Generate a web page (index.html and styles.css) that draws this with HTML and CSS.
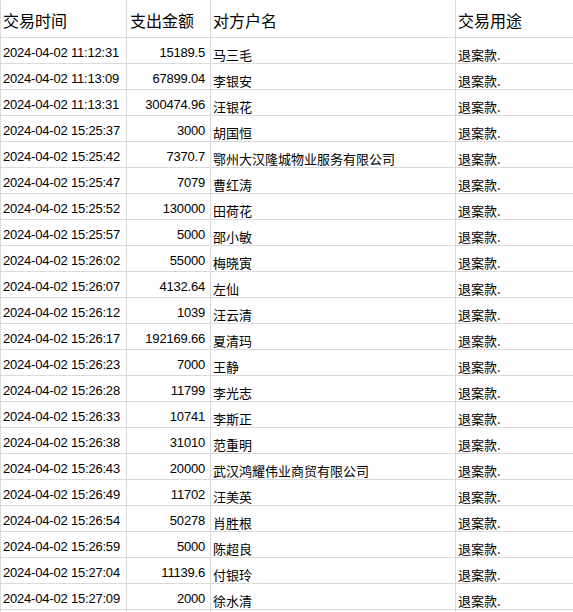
FILE: index.html
```html
<!DOCTYPE html>
<html lang="zh-CN">
<head>
<meta charset="utf-8">
<title>交易明细</title>
<link rel="stylesheet" href="styles.css">
</head>
<body>
<div class="sheet">
  <div class="row head">
    <div class="cell c-time">交易时间</div>
    <div class="cell c-amt">支出金额</div>
    <div class="cell c-name">对方户名</div>
    <div class="cell c-use">交易用途</div>
  </div>
  <div class="row"><div class="cell c-time">2024-04-02 11:12:31</div><div class="cell c-amt">15189.5</div><div class="cell c-name">马三毛</div><div class="cell c-use">退案款.</div></div>
  <div class="row"><div class="cell c-time">2024-04-02 11:13:09</div><div class="cell c-amt">67899.04</div><div class="cell c-name">李银安</div><div class="cell c-use">退案款.</div></div>
  <div class="row"><div class="cell c-time">2024-04-02 11:13:31</div><div class="cell c-amt">300474.96</div><div class="cell c-name">汪银花</div><div class="cell c-use">退案款.</div></div>
  <div class="row"><div class="cell c-time">2024-04-02 15:25:37</div><div class="cell c-amt">3000</div><div class="cell c-name">胡国恒</div><div class="cell c-use">退案款.</div></div>
  <div class="row"><div class="cell c-time">2024-04-02 15:25:42</div><div class="cell c-amt">7370.7</div><div class="cell c-name">鄂州大汉隆城物业服务有限公司</div><div class="cell c-use">退案款.</div></div>
  <div class="row"><div class="cell c-time">2024-04-02 15:25:47</div><div class="cell c-amt">7079</div><div class="cell c-name">曹红涛</div><div class="cell c-use">退案款.</div></div>
  <div class="row"><div class="cell c-time">2024-04-02 15:25:52</div><div class="cell c-amt">130000</div><div class="cell c-name">田荷花</div><div class="cell c-use">退案款.</div></div>
  <div class="row"><div class="cell c-time">2024-04-02 15:25:57</div><div class="cell c-amt">5000</div><div class="cell c-name">邵小敏</div><div class="cell c-use">退案款.</div></div>
  <div class="row"><div class="cell c-time">2024-04-02 15:26:02</div><div class="cell c-amt">55000</div><div class="cell c-name">梅晓寅</div><div class="cell c-use">退案款.</div></div>
  <div class="row"><div class="cell c-time">2024-04-02 15:26:07</div><div class="cell c-amt">4132.64</div><div class="cell c-name">左仙</div><div class="cell c-use">退案款.</div></div>
  <div class="row"><div class="cell c-time">2024-04-02 15:26:12</div><div class="cell c-amt">1039</div><div class="cell c-name">汪云清</div><div class="cell c-use">退案款.</div></div>
  <div class="row"><div class="cell c-time">2024-04-02 15:26:17</div><div class="cell c-amt">192169.66</div><div class="cell c-name">夏清玛</div><div class="cell c-use">退案款.</div></div>
  <div class="row"><div class="cell c-time">2024-04-02 15:26:23</div><div class="cell c-amt">7000</div><div class="cell c-name">王静</div><div class="cell c-use">退案款.</div></div>
  <div class="row"><div class="cell c-time">2024-04-02 15:26:28</div><div class="cell c-amt">11799</div><div class="cell c-name">李光志</div><div class="cell c-use">退案款.</div></div>
  <div class="row"><div class="cell c-time">2024-04-02 15:26:33</div><div class="cell c-amt">10741</div><div class="cell c-name">李斯正</div><div class="cell c-use">退案款.</div></div>
  <div class="row"><div class="cell c-time">2024-04-02 15:26:38</div><div class="cell c-amt">31010</div><div class="cell c-name">范重明</div><div class="cell c-use">退案款.</div></div>
  <div class="row"><div class="cell c-time">2024-04-02 15:26:43</div><div class="cell c-amt">20000</div><div class="cell c-name">武汉鸿耀伟业商贸有限公司</div><div class="cell c-use">退案款.</div></div>
  <div class="row"><div class="cell c-time">2024-04-02 15:26:49</div><div class="cell c-amt">11702</div><div class="cell c-name">汪美英</div><div class="cell c-use">退案款.</div></div>
  <div class="row"><div class="cell c-time">2024-04-02 15:26:54</div><div class="cell c-amt">50278</div><div class="cell c-name">肖胜根</div><div class="cell c-use">退案款.</div></div>
  <div class="row"><div class="cell c-time">2024-04-02 15:26:59</div><div class="cell c-amt">5000</div><div class="cell c-name">陈超良</div><div class="cell c-use">退案款.</div></div>
  <div class="row"><div class="cell c-time">2024-04-02 15:27:04</div><div class="cell c-amt">11139.6</div><div class="cell c-name">付银玲</div><div class="cell c-use">退案款.</div></div>
  <div class="row"><div class="cell c-time">2024-04-02 15:27:09</div><div class="cell c-amt">2000</div><div class="cell c-name">徐水清</div><div class="cell c-use">退案款.</div></div>
  <div class="row"><div class="cell c-time"></div><div class="cell c-amt"></div><div class="cell c-name"></div><div class="cell c-use"></div></div>
</div>
</body>
</html>
```

FILE: styles.css
```css
html, body {
  margin: 0;
  padding: 0;
  background: #ffffff;
  overflow: hidden;
}

.sheet {
  width: 100%;
  color: #000000;
  font-family: "Liberation Sans", "Noto Sans CJK SC", sans-serif;
}

.row {
  display: grid;
  grid-template-columns: 127px 84px 245px 1fr;
  height: 26px;
  box-sizing: border-box;
  border-bottom: 1px solid #dadada;
}

.row.head {
  height: 38px;
}

.cell {
  box-sizing: border-box;
  border-right: 1px solid #dadada;
  display: flex;
  align-items: flex-end;
  white-space: nowrap;
  overflow: hidden;
  padding: 0 2px 3px 2px;
  line-height: 15px;
}

.c-time {
  border-left: 1px solid #dadada;
  font-size: 13px;
  letter-spacing: -0.2px;
  padding-left: 2px;
}

.c-amt {
  justify-content: flex-end;
  font-size: 13px;
  letter-spacing: -0.2px;
  padding-right: 5px;
}

.c-name,
.c-use {
  font-family: "Noto Sans CJK SC", "Liberation Sans", sans-serif;
  font-size: 13px;
  line-height: 15px;
  padding-bottom: 1px;
}

.c-use {
  border-right: none;
}

.head .cell {
  font-family: "Noto Sans CJK SC", "Liberation Sans", sans-serif;
  font-size: 16px;
  letter-spacing: 0;
  line-height: 18px;
  align-items: center;
  justify-content: flex-start;
  padding: 2px 2px 0 2px;
}

.head .c-amt {
  padding-left: 3px;
}
```
